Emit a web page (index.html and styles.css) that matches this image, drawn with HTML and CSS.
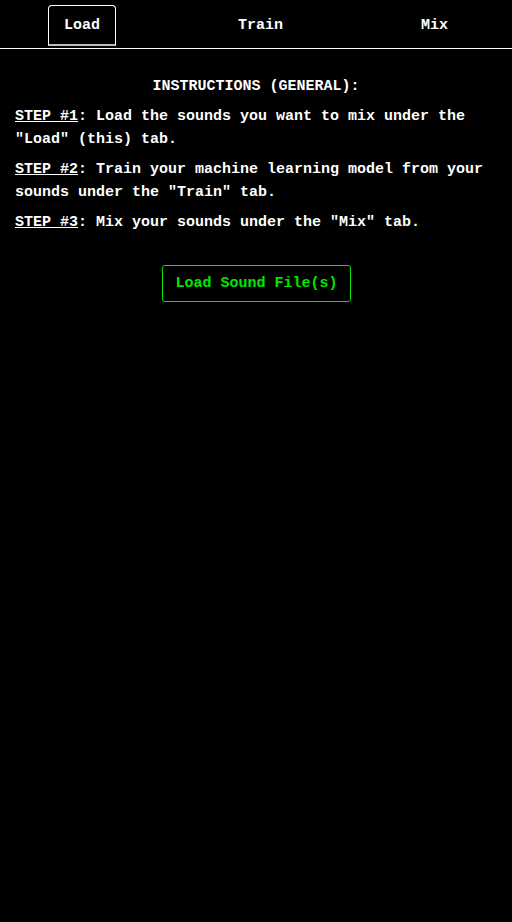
FILE: index.html
```html
<!DOCTYPE html>
<html>
<head>
<meta charset="utf-8">
<link rel="stylesheet" href="styles.css">
</head>
<body>
<nav class="tabs">
  <div class="tab active">Load</div>
  <div class="tab">Train</div>
  <div class="tab">Mix</div>
</nav>
<main class="content">
  <h1 class="title">INSTRUCTIONS (GENERAL):</h1>
  <p class="step"><u>STEP #1</u>: Load the sounds you want to mix under the "Load" (this) tab.</p>
  <p class="step"><u>STEP #2</u>: Train your machine learning model from your sounds under the "Train" tab.</p>
  <p class="step"><u>STEP #3</u>: Mix your sounds under the "Mix" tab.</p>
  <div class="actions">
    <button class="load-btn">Load Sound File(s)</button>
  </div>
</main>
</body>
</html>
```
FILE: styles.css
```css
html, body {
  margin: 0;
  padding: 0;
  background: #000;
  color: #fff;
  font-family: "Liberation Mono", "Courier New", monospace;
  font-weight: bold;
  font-size: 15px;
}
.tabs {
  display: flex;
  justify-content: space-between;
  align-items: flex-end;
  height: 48px;
  padding: 0 48px;
  border-bottom: 1px solid #fff;
}
.tab {
  padding: 1px 15px 0;
  height: 37px;
  line-height: 38px;
  border: 1px solid transparent;
  border-bottom: 2px solid transparent;
  border-radius: 4px 4px 0 0;
  margin-bottom: 2px;
}
.tab.active {
  border-color: #fff;
  border-bottom-color: #bbb;
}
.content {
  padding: 26px 15px 0;
}
.title {
  margin: 0;
  text-align: center;
  font-size: 15px;
  line-height: 23px;
  font-weight: bold;
}
.step {
  margin: 7px 0 0;
  line-height: 23px;
}
.actions {
  display: flex;
  justify-content: center;
  margin-top: 31px;
}
.load-btn {
  background: #000;
  color: #00e600;
  border: 1px solid #00e600;
  border-radius: 3px;
  font-family: "Liberation Mono", "Courier New", monospace;
  font-weight: bold;
  font-size: 15px;
  height: 37px;
  padding: 0 12px;
  margin-left: 1px;
}
```
